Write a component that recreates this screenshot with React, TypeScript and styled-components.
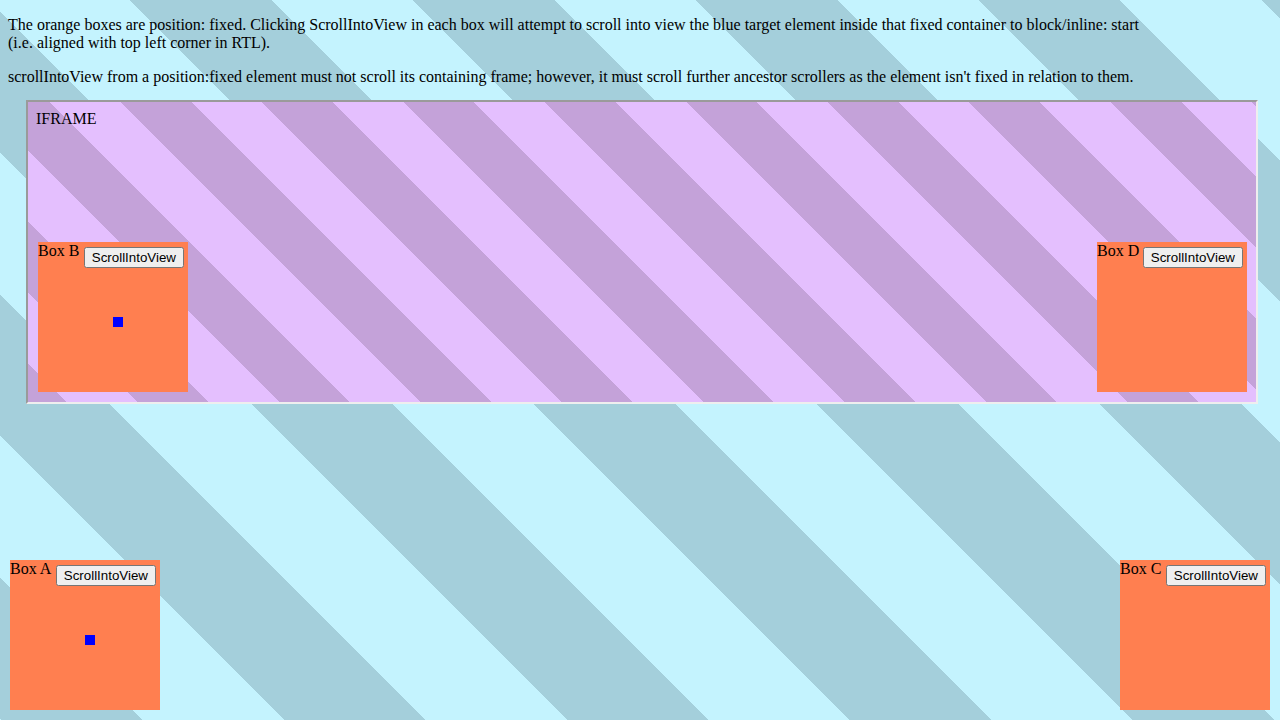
import React from "react";
import styled, { createGlobalStyle } from "styled-components";

const GlobalStyle = createGlobalStyle`
  html, body {
    margin: 0;
    padding: 0;
  }
  body {
    font-family: "Liberation Serif", "Times New Roman", serif;
    font-size: 16px;
    color: #000;
  }
`;

const Page = styled.div`
  position: relative;
  box-sizing: border-box;
  width: 100vw;
  height: 100vh;
  overflow: hidden;
  padding: 16px 8px 0;
  background: repeating-linear-gradient(
    45deg,
    #c4f3fe 0px 1px,
    #a4cfdb 1px 101px,
    #c4f3fe 101px 200px
  );
`;

const Para = styled.p<{ $last?: boolean }>`
  margin: 0 0 ${(p) => (p.$last ? "14px" : "16px")};
  line-height: normal;
`;

const Frame = styled.div`
  position: relative;
  box-sizing: border-box;
  width: 1232px;
  height: 304px;
  margin-left: 18px;
  border-style: solid;
  border-width: 2px;
  border-color: #9a9a9a #eeeeee #eeeeee #9a9a9a;
  padding: 8px;
  background: repeating-linear-gradient(
    45deg,
    #c4a2d9 0px 27.5px,
    #e4bffe 27.5px 77.5px,
    #c4a2d9 77.5px 100px
  );
`;

const FrameLabel = styled.div`
  line-height: normal;
`;

const Box = styled.div<{ $side: "left" | "right"; $inset: number; $fixed?: boolean }>`
  position: ${(p) => (p.$fixed ? "fixed" : "absolute")};
  bottom: 10px;
  ${(p) => p.$side}: ${(p) => p.$inset}px;
  display: flex;
  align-items: flex-start;
  justify-content: space-between;
  width: 150px;
  height: 150px;
  background: #ff7f50;
  line-height: normal;
`;

const BoxName = styled.span`
  white-space: nowrap;
`;

const ScrollButton = styled.button`
  font-family: "Liberation Sans", Arial, sans-serif;
  font-size: 13.333px;
  margin: 5px 4px 0 0;
`;

const Target = styled.div`
  position: absolute;
  left: 75px;
  top: 75px;
  width: 10px;
  height: 10px;
  background: #0000ff;
`;

type FixedBoxProps = {
  name: string;
  side: "left" | "right";
  inset: number;
  fixed?: boolean;
  target?: boolean;
};

const FixedBox = ({ name, side, inset, fixed, target }: FixedBoxProps) => (
  <Box $side={side} $inset={inset} $fixed={fixed}>
    <BoxName>{name}</BoxName>
    <ScrollButton>ScrollIntoView</ScrollButton>
    {target && <Target />}
  </Box>
);

const App = () => {
  return (
    <>
      <GlobalStyle />
      <Page>
        <Para>
          The orange boxes are position: fixed. Clicking ScrollIntoView in each box will attempt to
          scroll into view the blue target element inside that fixed container to block/inline: start
          <br />
          (i.e. aligned with top left corner in RTL).
        </Para>
        <Para $last>
          scrollIntoView from a position:fixed element must not scroll its containing frame; however,
          it must scroll further ancestor scrollers as the element isn't fixed in relation to them.
        </Para>
        <Frame>
          <FrameLabel>IFRAME</FrameLabel>
          <FixedBox name="Box B" side="left" inset={10} target />
          <FixedBox name="Box D" side="right" inset={9} />
        </Frame>
        <FixedBox name="Box A" side="left" inset={10} fixed target />
        <FixedBox name="Box C" side="right" inset={10} fixed />
      </Page>
    </>
  );
};

export default App;
